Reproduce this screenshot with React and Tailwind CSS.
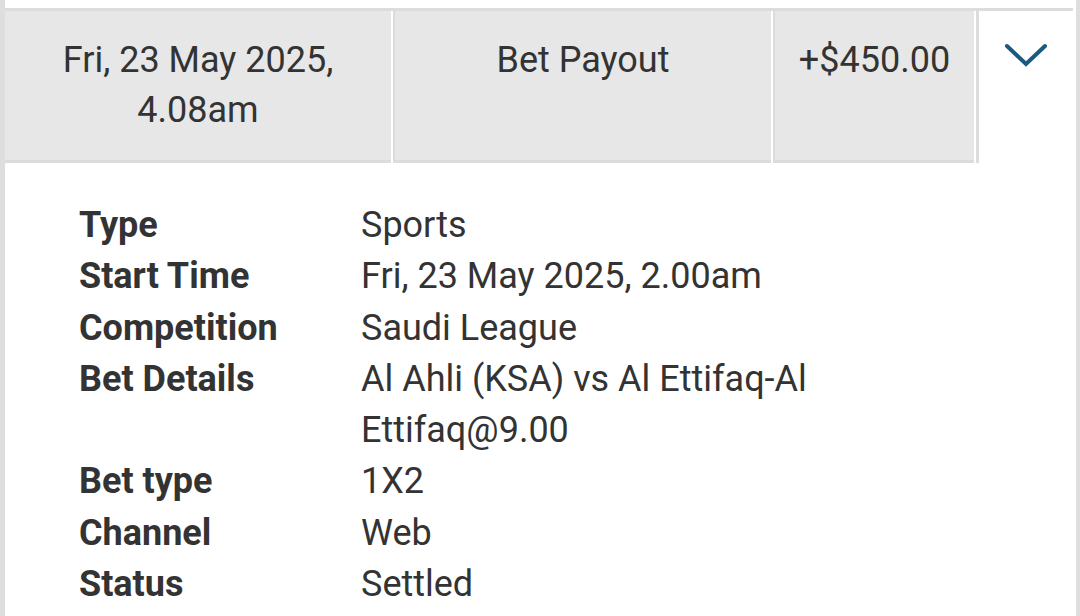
import React from 'react';

const rows = [
  ['Type', 'Sports'],
  ['Start Time', 'Fri, 23 May 2025, 2.00am'],
  ['Competition', 'Saudi League'],
  ['Bet Details', 'Al Ahli (KSA) vs Al Ettifaq-Al Ettifaq@9.00'],
  ['Bet type', '1X2'],
  ['Channel', 'Web'],
  ['Status', 'Settled'],
];

const App = () => {
  return (
    <div
      className="w-[1080px] h-[616px] overflow-hidden bg-white border-l-[5px] border-r-[4px] border-[#dedede] text-[#333333]"
      style={{ fontFamily: 'Roboto, "Noto Sans", sans-serif' }}
    >
      {/* Summary row */}
      <div className="mt-[8px] mr-[3px] flex border-t-[3px] border-[#dcdcdc] h-[155px]">
        <div className="w-[386px] bg-[#e7e7e7] border-b-[3px] border-[#dcdcdc] pt-[24px] text-center text-[36px] leading-[50px]">
          Fri, 23 May 2025,
          <br />
          4.08am
        </div>
        <div className="ml-[2px] w-[378px] bg-[#e7e7e7] border-l-[2px] border-b-[3px] border-[#dcdcdc] pt-[24px] text-center text-[36px] leading-[50px]">
          Bet Payout
        </div>
        <div className="ml-[2px] w-[201px] bg-[#e7e7e7] border-l-[2px] border-b-[3px] border-[#dcdcdc] pt-[24px] text-center text-[36px] leading-[50px]">
          +$450.00
        </div>
        <div className="ml-[2px] flex-1 bg-white border-l-[3px] border-[#dcdcdc] flex justify-center pt-[32px]">
          <svg width="44" height="26" viewBox="0 0 44 26" fill="none">
            <path d="M3 3 L22 21 L41 3" stroke="#1b5a80" strokeWidth="4" strokeLinecap="round" strokeLinejoin="miter" />
          </svg>
        </div>
      </div>

      {/* Details */}
      <div className="pl-[74px] pt-[37px] grid grid-cols-[282px_470px] text-[36px] leading-[51.3px]">
        {rows.map(([label, value]) => (
          <React.Fragment key={label}>
            <div className="font-bold">{label}</div>
            <div>{value}</div>
          </React.Fragment>
        ))}
      </div>
    </div>
  );
};

export default App;
